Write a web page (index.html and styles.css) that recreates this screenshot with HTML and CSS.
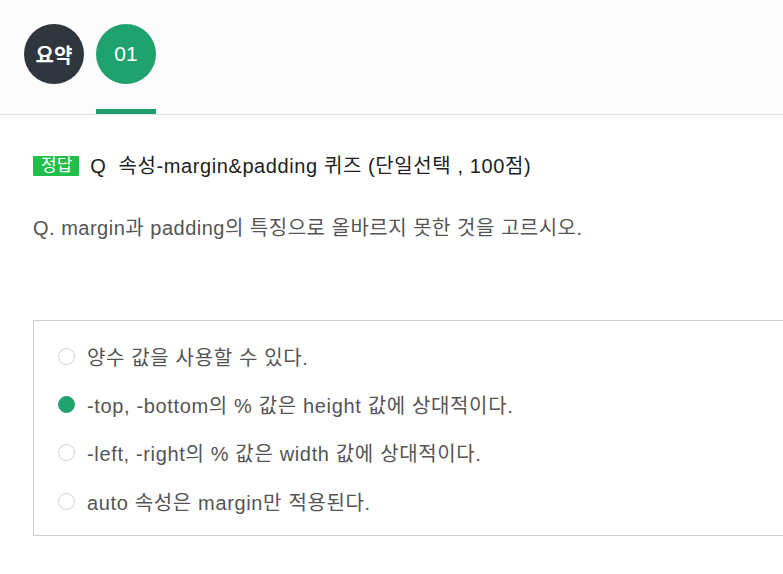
FILE: index.html
```html
<!DOCTYPE html>
<html lang="ko">
<head>
<meta charset="utf-8">
<link rel="stylesheet" href="styles.css">
</head>
<body>
<header class="tabs">
  <div class="tab">
    <span class="circle dark">요약</span>
  </div>
  <div class="tab active">
    <span class="circle green">01</span>
  </div>
</header>
<main class="content">
  <h2 class="title"><span class="badge">정답</span><span class="q">Q</span>속성-margin&amp;padding 퀴즈 (단일선택 , 100점)</h2>
  <p class="question">Q. margin과 padding의 특징으로 올바르지 못한 것을 고르시오.</p>
  <ul class="options">
    <li class="option"><span class="radio"></span>양수 값을 사용할 수 있다.</li>
    <li class="option"><span class="radio checked"></span>-top, -bottom의 % 값은 height 값에 상대적이다.</li>
    <li class="option"><span class="radio"></span>-left, -right의 % 값은 width 값에 상대적이다.</li>
    <li class="option"><span class="radio"></span>auto 속성은 margin만 적용된다.</li>
  </ul>
</main>
</body>
</html>
```

FILE: styles.css
```css
* { box-sizing: border-box; }
html, body { margin: 0; padding: 0; }
body {
  background: #fff;
  font-family: "Liberation Sans", "Noto Sans CJK KR", sans-serif;
  color: #333;
  overflow: hidden;
  width: 783px;
  height: 574px;
}
.tabs {
  display: flex;
  gap: 12px;
  padding: 24px 0 0 24px;
  height: 115px;
  background: #fcfcfc;
  border-bottom: 1px solid #e2e2e2;
}
.tab {
  width: 60px;
  height: 90px;
  display: flex;
  flex-direction: column;
  align-items: center;
}
.tab.active {
  border-bottom: 5px solid #1f9f6e;
}
.circle {
  width: 60px;
  height: 60px;
  border-radius: 50%;
  display: flex;
  align-items: center;
  justify-content: center;
  color: #fff;
  font-size: 20px;
  font-weight: 700;
}
.circle.dark { background: #30363d; }
.circle.green { background: #20a26f; font-weight: 400; font-size: 21px; }
.content {
  padding: 0 0 0 33px;
}
.title {
  margin: 39px 0 0;
  font-size: 20px;
  font-weight: 400;
  color: #222;
  display: flex;
  align-items: center;
  line-height: 24px;
  letter-spacing: 0.6px;
}
.badge {
  display: inline-block;
  background: #20bf4b;
  color: #fff;
  font-size: 17px;
  line-height: 20px;
  height: 20px;
  padding: 0 7px 0 8px;
  margin-right: 11px;
  border-radius: 1px;
  letter-spacing: 0;
}
.q { margin-right: 12px; }
.question {
  margin: 38px 0 0;
  font-size: 20px;
  line-height: 24px;
  color: #555;
  letter-spacing: 0.5px;
}
.options {
  list-style: none;
  margin: 80px 0 0;
  padding: 11px 0 13px 24px;
  width: 770px;
  height: 216px;
  border: 1px solid #cfcfcf;
}
.option {
  display: flex;
  align-items: center;
  height: 48.3px;
  font-size: 20px;
  color: #555;
  letter-spacing: 0.65px;
}
.radio {
  width: 17px;
  height: 17px;
  border-radius: 50%;
  border: 1px solid #cfd3d6;
  margin-right: 12px;
  flex: none;
}
.radio.checked {
  background: #20a26f;
  border-color: #20a26f;
}
```
